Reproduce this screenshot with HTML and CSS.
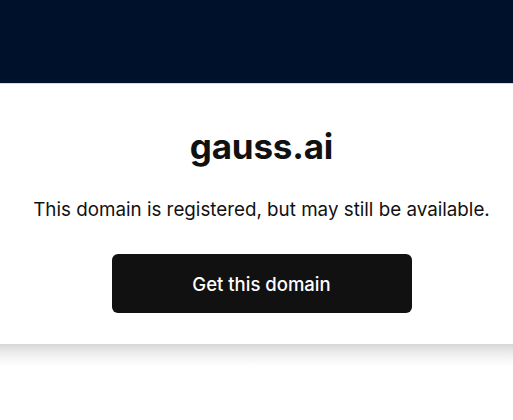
FILE: index.html
```html
<!DOCTYPE html>
<html lang="en">
<head>
<meta charset="utf-8">
<title>gauss.ai</title>
<link rel="stylesheet" href="styles.css">
</head>
<body>
<header class="topbar"></header>
<main class="card">
  <h1 class="domain">gauss.ai</h1>
  <p class="message">This domain is registered, but may still be available.</p>
  <a class="cta" href="#">Get this domain</a>
</main>
<div class="card-shadow"></div>
</body>
</html>
```
FILE: styles.css
```css
html, body {
  margin: 0;
  padding: 0;
  background: #ffffff;
}
body {
  font-family: "Inter", "Noto Sans", sans-serif;
  color: #111111;
}
.topbar {
  height: 83px;
  background: #00112c;
  border-bottom: 1px solid #d4dbe4;
}
.card {
  display: flex;
  flex-direction: column;
  align-items: center;
  padding: 40px 6px 30px 16px;
  height: 260px;
  box-sizing: border-box;
  background: #fff;
}
.card-shadow {
  height: 24px;
  background: linear-gradient(to bottom, #d6d6d6 0%, #e6e6e6 25%, #f4f4f4 55%, #fdfdfd 85%, #ffffff 100%);
}
.domain {
  margin: 0;
  font-size: 35px;
  line-height: 44px;
  font-weight: 700;
  color: #111;
  letter-spacing: -0.2px;
}
.message {
  margin: 30px 0 0;
  font-size: 18.8px;
  line-height: 24px;
  font-weight: 400;
}
.cta {
  margin-top: 32px;
  display: flex;
  align-items: center;
  justify-content: center;
  width: 300px;
  height: 59px;
  border-radius: 6px;
  background: #111111;
  color: #ffffff;
  font-size: 18.5px;
  font-weight: 500;
  text-decoration: none;
}
```
